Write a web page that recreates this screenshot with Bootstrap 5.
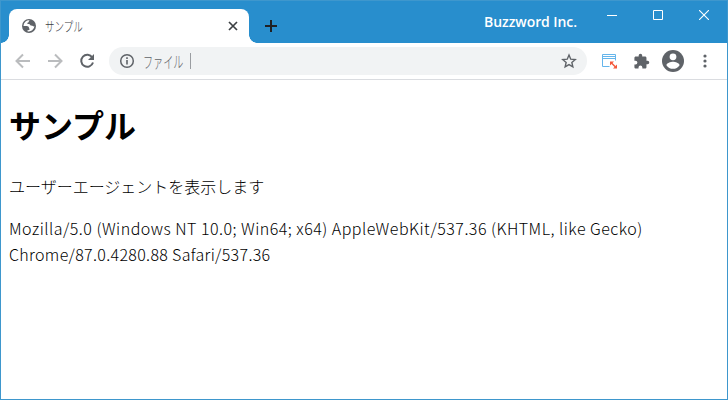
<!DOCTYPE html>
<html lang="ja">
<head>
<meta charset="utf-8">
<meta name="viewport" content="width=device-width, initial-scale=1">
<title>サンプル</title>
<link href="https://cdn.jsdelivr.net/npm/bootstrap@5.3.0/dist/css/bootstrap.min.css" rel="stylesheet">
<style>
body{font-family:"Noto Sans CJK JP",sans-serif;color:#000}
svg{display:block;flex:none}
.window{height:400px;border:1px solid #3e97cd}
.titlebar{height:42px;background:#288ecd;padding-left:8px}
.tab{width:240px;height:34px;border-radius:8px 8px 0 0;position:relative;padding:0 11px 0 13px;color:#3c4043}
.tab::before,.tab::after{content:"";position:absolute;bottom:0;width:8px;height:8px}
.tab::before{left:-8px;background:radial-gradient(circle at 0 0,transparent 7.5px,#fff 8px)}
.tab::after{right:-8px;background:radial-gradient(circle at 100% 0,transparent 7.5px,#fff 8px)}
.tab-label{font-size:13px;font-weight:300;line-height:16px;margin-left:9px;transform:scaleX(.73);transform-origin:left}
.newtab{margin:0 0 11px 16px}
.brand{font:600 14px/20px "Open Sans",sans-serif;margin:11px 30px 0 auto;white-space:nowrap;letter-spacing:-.07px}
.controls{gap:36px;margin:9px 18px 0 0}
.toolbar{height:37px;border-bottom:1px solid #dadce0;padding-left:14px}
.omnibox{width:478px;height:28px;background:#f1f3f4;margin-left:14px;padding:0 10px;color:#5f6368}
.scheme{font-size:16px;font-weight:300;line-height:20px;width:40px;margin-left:8px}
.scheme span{display:block;width:64px;transform:scaleX(.63);transform-origin:left}
.caret-line{width:1px;height:16px;background:#9a9da1;margin-left:7px}
.page{padding:20px 8px}
.page h1{font-size:32px;line-height:48px;font-weight:700;margin:0 0 25px}
.page p{font-weight:300;font-size:16px;line-height:26px;margin:0 0 16px;white-space:nowrap}
.agent span{display:block}
.agent-platform{letter-spacing:.48px}
.agent-browser{letter-spacing:.33px}
</style>
</head>
<body>
<div class="window d-flex flex-column overflow-hidden bg-white">
<header class="titlebar d-flex flex-shrink-0">
<div class="tab bg-white d-flex align-items-center align-self-end">
<svg width="14" height="14" viewBox="0 0 14 14"><circle cx="7" cy="7" r="7" fill="#5f6368"/><path d="M8.500 1.500C7 1.300 6.800 2 6.800 2.700c0 .8-1.500.6-1.500 1.500 0 .7.900.8 1.700.8.900 0 .8 1.200 1.700 1.400.8.200 1.700.1 2.200.7.500.5 1 .3 1.500 0A5.500 5.500 0 0 1 5.500 12.300v-1c.9 0 2.100-.1 2.100-1 0-.8-.7-1-.7-1.800C6.900 7.500 5.500 7 4 7H1.500A5.500 5.500 0 0 1 8.500 1.500z" fill="#fff"/></svg>
<span class="tab-label">サンプル</span>
<svg class="ms-auto" width="10" height="10" viewBox="0 0 10 10"><path d="M1 1l8 8M9 1L1 9" stroke="#3c4043" stroke-width="1.700"/></svg>
</div>
<svg class="newtab align-self-end" width="12" height="12" viewBox="0 0 12 12"><path d="M6 0v12M0 6h12" stroke="#202124" stroke-width="2"/></svg>
<span class="brand text-white">Buzzword Inc.</span>
<div class="controls d-flex align-self-start">
<svg width="10" height="10" viewBox="0 0 10 10"><path d="M0 5.500h10" stroke="#fff"/></svg>
<svg width="10" height="10" viewBox="0 0 10 10"><path d="M.5.5h9v9h-9z" stroke="#fff" fill="none"/></svg>
<svg width="10" height="10" viewBox="0 0 10 10"><path d="M0 0l10 10M10 0L0 10" stroke="#fff" stroke-width="1.100"/></svg>
</div>
</header>
<nav class="toolbar d-flex align-items-center flex-shrink-0">
<svg width="16" height="16" viewBox="0 0 16 16"><path d="M15 8H2M8 1.500L1.500 8 8 14.500" stroke="#babcbe" stroke-width="2" fill="none"/></svg>
<svg class="ms-3" width="16" height="16" viewBox="0 0 16 16"><path d="M1 8h13M8 1.500L14.500 8 8 14.500" stroke="#babcbe" stroke-width="2" fill="none"/></svg>
<svg class="ms-3" width="16" height="16" viewBox="0 0 16 16"><path d="M13.300 4.500A6 6 0 1 0 14 9.500" stroke="#5f6368" stroke-width="2" fill="none"/><path d="M15 1v6H9z" fill="#5f6368"/></svg>
<div class="omnibox rounded-pill d-flex align-items-center">
<svg width="16" height="16" viewBox="0 0 16 16"><circle cx="8" cy="8" r="6.300" stroke="#5f6368" stroke-width="1.500" fill="none"/><path d="M8 7v4.500M8 4.300v1.700" stroke="#5f6368" stroke-width="1.600"/></svg>
<div class="scheme"><span>ファイル</span></div>
<span class="caret-line"></span>
<svg class="ms-auto" width="16" height="16" viewBox="0 0 16 16"><path d="M8 2l1.750 4.150 4.500.4-3.400 2.950 1 4.400L8 11.600l-3.850 2.300 1-4.400-3.400-2.950 4.500-.4z" stroke="#5f6368" stroke-width="1.400" fill="none"/></svg>
</div>
<svg class="ms-auto" width="17" height="16" viewBox="0 0 17 16"><path d="M1.500 1.500h13v12h-13zM1.500 3.500h13M1.500 5.500h13" stroke="#65b5eb" fill="none"/><path d="M8.500 7.500H16V16H8.500z" fill="#fff"/><path d="M10.500 10l4 4" stroke="#f4573a" stroke-width="1.500"/><path d="M9 8.500h4L9 12.500zM16 15.500h-4l4-4z" fill="#f4573a"/></svg>
<svg style="margin-left:15px" width="17" height="17" viewBox="0 0 24 24"><path d="M20.500 11H19V7c0-1.100-.9-2-2-2h-4V3.500a2.500 2.500 0 0 0-5 0V5H4c-1.100 0-2 .9-2 2v3.800h1.500a2.700 2.700 0 0 1 0 5.400H2V20c0 1.100.9 2 2 2h3.800v-1.500a2.700 2.700 0 0 1 5.400 0V22H17c1.100 0 2-.9 2-2v-4h1.500a2.500 2.500 0 0 0 0-5z" fill="#5f6368"/></svg>
<svg style="margin-left:12px" width="22" height="22" viewBox="0 0 22 22"><circle cx="11" cy="11" r="11" fill="#5f6368"/><circle cx="11" cy="6.800" r="3.400" fill="#fff"/><path d="M4.400 15.300c0-2.200 4.400-3.500 6.600-3.500s6.600 1.300 6.600 3.500a7.900 7.900 0 0 1-13.200 0z" fill="#fff"/></svg>
<svg style="margin:0 20px 0 19px" width="4" height="14" viewBox="0 0 4 14"><g fill="#5f6368"><circle cx="2" cy="2" r="1.600"/><circle cx="2" cy="7" r="1.600"/><circle cx="2" cy="12" r="1.600"/></g></svg>
</nav>
<main class="page">
<h1>サンプル</h1>
<p>ユーザーエージェントを表示します</p>
<p class="agent"><span class="agent-platform">Mozilla/5.0 (Windows NT 10.0; Win64; x64) AppleWebKit/537.36 (KHTML, like Gecko)</span> <span class="agent-browser">Chrome/87.0.4280.88 Safari/537.36</span></p>
</main>
</div>
<script src="https://cdn.jsdelivr.net/npm/bootstrap@5.3.0/dist/js/bootstrap.bundle.min.js"></script>
</body>
</html>
